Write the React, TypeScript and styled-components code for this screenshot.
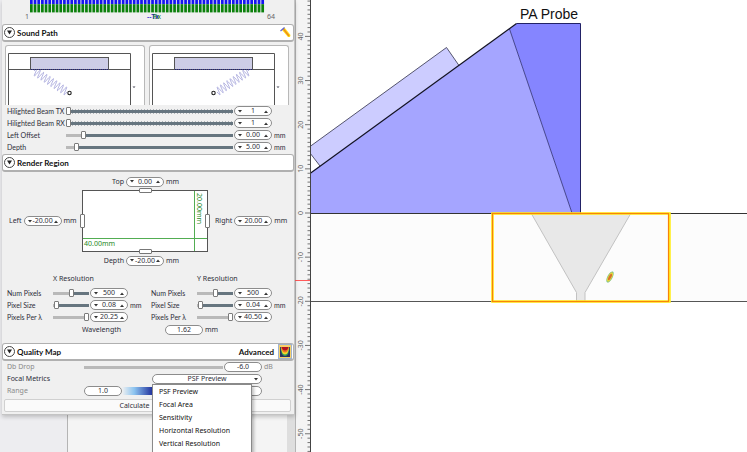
import React, { useState } from "react";
import styled, { createGlobalStyle } from "styled-components";

const GlobalStyle = createGlobalStyle`
  * { box-sizing: border-box; }
  body {
    margin: 0;
    background: #fff;
    color: #2e2e38;
    font: 7px/10px "Noto Sans", "Open Sans", sans-serif;
  }
  button, input, select { font: inherit; color: inherit; margin: 0; padding: 0; }
  svg { display: block; }
`;

const Page = styled.div`
  display: flex;
  height: 100vh;
  overflow: hidden;
`;

const Sidebar = styled.aside`
  display: flex;
  flex-direction: column;
  flex: none;
  width: clamp(280px, 40vw, 295px);
  background: #ededf0;
`;

const Panel = styled.div`
  margin-left: 2px;
  background: #f0f0f0;
  border-right: 1px solid #c4c4c4;
  border-bottom: 1px solid #c4c4c4;
  box-shadow: 0 2px 4px rgba(0, 0, 0, 0.2);
  padding-bottom: 2px;
  z-index: 1;
`;

const Backdrop = styled.div`
  flex: 1;
  margin-left: 67px;
  background: #f4f4f4;
  border-left: 1px solid #b4b4b4;
  border-right: 8px solid #dedede;
`;

const BeamStrip = styled.div`
  padding: 0 29px 0 28px;
`;

const BeamLabels = styled.div`
  display: flex;
  justify-content: space-between;
  margin: 0 -10px 0 -5px;
  height: 11px;
  line-height: 8px;
  color: #666;
`;

const TxLabel = styled.span`
  color: #2323d0;
  margin-left: 12px;
  font-weight: 600;
`;

const RxLabel = styled.span`
  color: #168016;
  margin-left: -6px;
`;

const SectionHeader = styled.header`
  display: flex;
  align-items: center;
  gap: 2px;
  height: 18px;
  padding: 0 1px;
  background: #fff;
  border: 1px solid #b0b0b0;
  border-bottom-width: 2px;
  border-radius: 3px;
`;

const CollapseButton = styled.button`
  display: grid;
  place-items: center;
  width: 11px;
  height: 11px;
  border: 1px solid #444;
  border-radius: 50%;
  background: #fff;
`;

const SectionTitle = styled.h2`
  flex: 1;
  margin: 0;
  font-family: Lato, "Noto Sans", sans-serif;
  font-size: 8px;
  line-height: 12px;
  font-weight: 700;
  color: #111;
`;

const ModeLabel = styled.span`
  font-family: Lato, "Noto Sans", sans-serif;
  font-size: 8px;
  font-weight: 700;
  color: #111;
  margin-right: 2px;
`;

const IconButton = styled.button<{ $active?: boolean }>`
  display: grid;
  place-items: center;
  width: 14px;
  height: 15px;
  border: 1px solid ${(p) => (p.$active ? "#9fb2cf" : "transparent")};
  background: ${(p) => (p.$active ? "#f8d26a" : "transparent")};
`;

const DiagramPair = styled.div`
  display: grid;
  grid-template-columns: 1fr 1fr;
  gap: 4px;
  height: 63px;
  padding: 3px 5px 0 3px;
`;

const DiagramCard = styled.div`
  overflow: hidden;
  background: #fff;
  border: 1px solid #b8b8b8;
  border-bottom: 0;
  border-radius: 3px 3px 0 0;
`;

const ParamList = styled.div`
  padding: 0 2px 1px 5px;
`;

const ParamRow = styled.div<{ $cols: string }>`
  display: grid;
  grid-template-columns: ${(p) => p.$cols};
  align-items: center;
  height: 12px;
  white-space: nowrap;
`;

const Label = styled.label<{ $muted?: boolean }>`
  color: ${(p) => (p.$muted ? "#8a8a8a" : "#2e2e3a")};
`;

const Unit = styled.span<{ $muted?: boolean }>`
  padding-left: 2px;
  color: ${(p) => (p.$muted ? "#8a8a8a" : "#2e2e3a")};
`;

const CompactRow = styled(ParamRow)`
  ${Label}, ${Unit} { font-family: Lato, "Noto Sans", sans-serif; }
`;

const SliderInput = styled.input<{ $pct: number; $ticked?: boolean; $plain?: boolean }>`
  appearance: none;
  width: 100%;
  height: 9px;
  background:
    linear-gradient(90deg, #b9b9b9 ${(p) => p.$pct}%, #66757f ${(p) => p.$pct}%) center / 100% 3px no-repeat
    ${(p) => (p.$ticked ? ", repeating-linear-gradient(90deg, #b0b4b8 0 1px, transparent 1px 3px) center / 100% 5px no-repeat" : "")};
  &::-webkit-slider-runnable-track { height: 9px; }
  &::-webkit-slider-thumb {
    appearance: none;
    width: 5px;
    height: 8px;
    border: 1px solid #7c7c7c;
    border-radius: 1px;
    background: #fff;
    opacity: ${(p) => (p.$plain ? 0 : 1)};
  }
`;

const SpinBox = styled.div`
  display: flex;
  align-items: center;
  width: 38px;
  height: 10px;
  padding: 0 3px;
  background: #fff;
  border: 1px solid #8c8c8c;
  border-radius: 5px;
`;

const SpinButton = styled.button`
  display: grid;
  place-items: center;
  flex: none;
  width: 4px;
  height: 7px;
  border: 0;
  background: none;
`;

const ValueInput = styled.input`
  flex: 1;
  min-width: 0;
  width: 100%;
  height: 8px;
  border: 0;
  background: none;
  text-align: center;
  line-height: 8px;
`;

const RegionGrid = styled.div`
  display: grid;
  grid-template-columns: 75px 1fr 84px;
  align-items: center;
  padding: 3px 2px 0 5px;
`;

const RegionEdge = styled.div`
  grid-column: 1 / -1;
  margin: 0 84px 0 75px;
  display: grid;
  grid-template-columns: 1fr 38px 1fr;
  align-items: center;
  height: 13px;
`;

const RegionSide = styled.div<{ $inset: number }>`
  display: flex;
  align-items: center;
  gap: 2px;
  padding-left: ${(p) => p.$inset}px;
  white-space: nowrap;
`;

const EdgeLabel = styled(Label)`
  text-align: right;
  padding-right: 2px;
`;

const RegionFrame = styled.div`
  position: relative;
  height: 62px;
  margin: 2px 0;
  background: #fff;
  border: 1px solid #555;
`;

const Handle = styled.button<{ $side: "left" | "right" | "top" | "bottom" }>`
  position: absolute;
  ${(p) =>
    p.$side === "left" || p.$side === "right"
      ? `top: 23px; width: 5px; height: 14px; ${p.$side}: -3px;`
      : `left: calc(50% - 6px); width: 13px; height: 5px; ${p.$side}: -3px;`}
  background: #fff;
  border: 1px solid #777;
  border-radius: 1px;
`;

const ResolutionGrid = styled.div`
  display: grid;
  grid-template-columns: 1fr 1fr;
  column-gap: 3px;
  padding: 6px 2px 0 5px;
`;

const ResolutionTitle = styled.h3`
  margin: 0;
  height: 14px;
  padding-left: 46px;
  font-size: 7px;
  line-height: 12px;
  font-weight: 400;
`;

const WavelengthRow = styled.div`
  display: flex;
  align-items: center;
  height: 14px;
  margin-bottom: 6px;
  padding-left: 80px;
`;

const WavelengthLabel = styled(Label)`
  width: 83px;
`;

const QualityBody = styled.div`
  padding: 0 2px 0 5px;
`;

const SelectWrap = styled.div`
  position: relative;
  display: flex;
  align-items: center;
`;

const MetricSelect = styled.select`
  appearance: none;
  width: 100%;
  height: 10px;
  border: 1px solid #8c8c8c;
  border-radius: 5px;
  background: #fff;
  text-align-last: center;
  line-height: 8px;
`;

const SelectArrow = styled.span`
  position: absolute;
  right: 4px;
  pointer-events: none;
`;

const Menu = styled.ul`
  position: absolute;
  top: 10px;
  left: 0;
  width: 100px;
  margin: 0;
  padding: 0 0 3px;
  list-style: none;
  background: #fff;
  border: 1px solid #8a8a8a;
  box-shadow: 2px 2px 3px rgba(0, 0, 0, 0.25);
`;

const MenuItem = styled.li`
  height: 13px;
  line-height: 13px;
  padding-left: 6px;
  color: #111;
  cursor: default;
`;

const RangeGradient = styled.div`
  height: 8px;
  background: linear-gradient(90deg, #f0f0f0, #8cc4f0 12%, #20309c 30%, #c33);
`;

const CalculateButton = styled.button`
  display: block;
  width: calc(100% - 5px);
  height: 13px;
  margin: 2px 3px 0 2px;
  padding-right: 26px;
  background: #fafafa;
  border: 1px solid #d0d0d0;
  border-radius: 2px;
  line-height: 11px;
`;

const Ruler = styled.div`
  flex: none;
  width: 15px;
  background: #f4f4f4;
`;

const Viewport = styled.main`
  flex: 1;
  min-width: 0;
  background: #fff;
`;

const Arrow = ({ up }: { up?: boolean }) => (
  <svg width="4" height="3" viewBox="0 0 4 3" aria-hidden="true">
    <path d={up ? "M0 3L2 .5L4 3Z" : "M0 0L2 2.5L4 0Z"} fill="#333" />
  </svg>
);

function Spin({ id, value, label }: { id: string; value: string; label: string }) {
  const [text, setText] = useState(value);
  const digits = value.includes(".") ? 2 : 0;
  const step = (d: number) => setText((t) => (Number(t) + d).toFixed(digits));
  return (
    <SpinBox>
      <SpinButton aria-label={`Decrease ${label}`} onClick={() => step(-1)}><Arrow /></SpinButton>
      <ValueInput id={id} value={text} onChange={(e) => setText(e.target.value)} />
      <SpinButton aria-label={`Increase ${label}`} onClick={() => step(1)}><Arrow up /></SpinButton>
    </SpinBox>
  );
}

function Slider({ pct, label, ticked, plain }: { pct: number; label: string; ticked?: boolean; plain?: boolean }) {
  const [v, setV] = useState(pct);
  return (
    <SliderInput type="range" min={0} max={100} value={v} $pct={v} $ticked={ticked} $plain={plain}
      aria-label={label} onChange={(e) => setV(Number(e.target.value))} />
  );
}

type Param = { id: string; label: string; pct: number; value: string; unit?: string; ticked?: boolean };

function ParamLine({ p, cols }: { p: Param; cols: string }) {
  return (
    <CompactRow $cols={cols}>
      <Label htmlFor={p.id}>{p.label}</Label>
      <Slider pct={p.pct} label={`${p.label} slider`} ticked={p.ticked} />
      <span />
      <Spin id={p.id} value={p.value} label={p.label} />
      <Unit>{p.unit}</Unit>
    </CompactRow>
  );
}

function Header({ title, children }: { title: string; children?: React.ReactNode }) {
  return (
    <SectionHeader>
      <CollapseButton aria-label={`Collapse ${title}`}>
        <svg width="5" height="5" viewBox="0 0 5 5"><path d="M0 .5H5L2.500 4.500Z" fill="#222" /></svg>
      </CollapseButton>
      <SectionTitle>{title}</SectionTitle>
      {children}
    </SectionHeader>
  );
}

function BeamChart() {
  return (
    <svg width="100%" height="13" viewBox="0 0 234 13" preserveAspectRatio="none" aria-hidden="true">
      {Array.from({ length: 64 }, (_, i) => (
        <g key={i}>
          <rect x={(i * 234) / 64} y="0" width="2.700" height="4.200" fill="#1414f0" />
          <rect x={(i * 234) / 64} y="4.200" width="2.700" height="8.200" fill="#0b800b" />
        </g>
      ))}
    </svg>
  );
}

function wave(x0: number, y0: number, x1: number, y1: number, cycles: number, amp: number) {
  const n = cycles * 12;
  const len = Math.hypot(x1 - x0, y1 - y0);
  const nx = -(y1 - y0) / len;
  const ny = (x1 - x0) / len;
  const sign = nx * ny > 0 ? 1 : -1;
  return Array.from({ length: n + 1 }, (_, i) => {
    const t = i / n;
    const a = Math.sin(t * cycles * Math.PI * 2) * amp * sign;
    return `${i ? "L" : "M"}${(x0 + (x1 - x0) * t + nx * a).toFixed(2)} ${(y0 + (y1 - y0) * t + ny * a).toFixed(2)}`;
  }).join("");
}

function BeamDiagram({ mirrored }: { mirrored?: boolean }) {
  const d = mirrored ? wave(99, 25, 67, 46, 10, 4) : wave(28, 25, 61, 46, 10, 4);
  return (
    <svg width="138" height="60" role="img" aria-label={mirrored ? "Receive beam path" : "Transmit beam path"}>
      <path d={d} fill="none" stroke="#a9a9dc" strokeWidth="0.900" />
      <path d="M2.500 60V7.500H124.500V60M2.500 23.500H124.500" fill="none" stroke="#555" />
      <rect x="24.500" y="11.500" width="78" height="12" fill="#cdcde6" stroke="#555" />
      <path d="M25 23.500H102" stroke="#1c1c80" strokeDasharray="1 1" />
      <circle cx="63.500" cy="47" r="1.700" fill="#fff" stroke="#222" strokeWidth="1.100" />
      <path d="M126.500 40.500H129.500L128 42Z" fill="#445" />
    </svg>
  );
}

const PencilIcon = () => (
  <svg width="13" height="13" viewBox="0 0 13 13">
    <path d="M3 3.500L5.500 1.500L11.500 9L11 11H9L3 4Z" fill="#ffe11a" />
    <path d="M4.500 3L10 10" stroke="#f08a1a" strokeWidth="1.400" />
    <path d="M1.500 5L5.500 1.500" stroke="#5b62d8" strokeWidth="1.200" />
  </svg>
);

const HeatIcon = () => (
  <svg width="10" height="10" viewBox="0 0 10 10">
    <rect width="10" height="10" fill="#2c3160" />
    <path d="M.5 0H9.500Q9 9 5 9Q1 9 .5 0Z" fill="#35a35a" />
    <path d="M1 0H9Q8.500 7.500 5 7.500Q1.500 7.500 1 0Z" fill="#f4d92b" />
    <path d="M1 0H9Q8 5.500 5 5.500Q2 5.500 1 0Z" fill="#ef7426" />
    <path d="M1.500 0H8.500Q7.500 3.500 5 3.500Q2.500 3.500 1.500 0Z" fill="#b01420" />
  </svg>
);

function RegionBox() {
  return (
    <svg width="100%" height="60" role="img" aria-label="Render region, 40.00mm by 20.00mm">
      <path d="M0 47.500H124M111.500 0V60" stroke="#52ad52" />
      <text x="1" y="55" fontSize="7" fill="#1f8a1f">40.00mm</text>
      <text transform="translate(114 2) rotate(90)" fontSize="7" fill="#1f8a1f">20.00mm</text>
    </svg>
  );
}

const ZERO = 213;
const MM = 4.415;

function RulerScale() {
  const ticks = Array.from({ length: 104 }, (_, i) => i - 55);
  return (
    <svg width="15" height="100%" aria-hidden="true">
      <path d="M.5 0V2000" stroke="#b4b4b4" />
      {ticks.map((t) => {
        const y = ZERO - t * MM;
        const major = t % 10 === 0;
        return (
          <g key={t}>
            <path d={`M${major ? 10 : 12.5} ${y}H15`} stroke="#666" strokeWidth="0.900" />
            {major && (
              <text transform={`translate(8 ${y}) rotate(-90)`} textAnchor="middle" fontSize="7" fill="#666">{t}</text>
            )}
          </g>
        );
      })}
      <path d="M0 280.500H15" stroke="#ff5a5a" />
    </svg>
  );
}

function Scene() {
  return (
    <svg width="100%" height="100%" role="img" aria-label="PA Probe on weld inspection region">
      <rect x="0" y="213" width="100%" height="88" fill="#fcfcfc" />
      <path d="M0 173L199.500 29L262 213H0Z" fill="#a5a5ff" />
      <path d="M199.500 29L206.500 23.500H270.500V213H262Z" fill="#8585ff" />
      <path d="M0 146.500L136.500 47.500L149 65.500L10 166L0 153Z" fill="#ccccff" />
      <path d="M0 146.500L136.500 47.500L149 65.500M0 153L10 166" fill="none" stroke="#44445c" strokeWidth="0.900" />
      <path d="M199.500 29L262 213" stroke="#3a3a80" strokeWidth="0.900" />
      <path d="M0 173.500L206.500 23.500" fill="none" stroke="#111122" strokeWidth="1.200" />
      <path d="M206.500 23.500H270.500V213" fill="none" stroke="#222266" />
      <rect x="0" y="213" width="100%" height="1" fill="#333" />
      <rect x="0" y="301" width="100%" height="1" fill="#555" />
      <path d="M221 213H321L275 292.500V301H266.500V292.500Z" fill="#e8e8e8" />
      <path d="M221 213L266.500 292.500V301M321 213L275 292.500V301" fill="none" stroke="#c2c2c2" />
      <rect x="182.500" y="213.500" width="177" height="88" fill="none" stroke="#ffee20" strokeWidth="2.600" />
      <rect x="182.500" y="213.500" width="176" height="88" fill="none" stroke="#f88408" strokeWidth="1.200" />
      <g transform="translate(300 277) rotate(28)">
        <ellipse rx="2.600" ry="6.200" fill="#7cc08c" />
        <ellipse rx="2" ry="5.200" fill="#e0d840" />
        <ellipse rx="1.300" ry="3.500" fill="#d9702c" />
      </g>
      <text x="210" y="19" fontFamily="Liberation Sans, Arial, sans-serif" fontSize="14" fill="#111">PA Probe</text>
      <path d="M.5 0V2000" stroke="#444" />
    </svg>
  );
}

const soundParams: Param[] = [
  { id: "tx", label: "Hilighted Beam TX", pct: 0, value: "1", ticked: true },
  { id: "rx", label: "Hilighted Beam RX", pct: 0, value: "1", ticked: true },
  { id: "offset", label: "Left Offset", pct: 9, value: "0.00", unit: "mm" },
  { id: "depth", label: "Depth", pct: 5, value: "5.00", unit: "mm" },
];

const resolutions: { title: string; params: Param[] }[] = [
  {
    title: "X Resolution",
    params: [
      { id: "xn", label: "Num Pixels", pct: 50, value: "500" },
      { id: "xs", label: "Pixel Size", pct: 3, value: "0.08", unit: "mm" },
      { id: "xl", label: "Pixels Per λ", pct: 100, value: "20.25" },
    ],
  },
  {
    title: "Y Resolution",
    params: [
      { id: "yn", label: "Num Pixels", pct: 50, value: "500" },
      { id: "ys", label: "Pixel Size", pct: 3, value: "0.04", unit: "mm" },
      { id: "yl", label: "Pixels Per λ", pct: 100, value: "40.50" },
    ],
  },
];

const metrics = ["PSF Preview", "Focal Area", "Sensitivity", "Horizontal Resolution", "Vertical Resolution"];

export default function App() {
  const [metric, setMetric] = useState(metrics[0]);
  return (
    <Page>
      <GlobalStyle />
      <Sidebar>
        <Panel>
          <BeamStrip>
            <BeamChart />
            <BeamLabels>
              <span>1</span>
              <span><TxLabel>--Tx</TxLabel><RxLabel>Rx</RxLabel></span>
              <span>64</span>
            </BeamLabels>
          </BeamStrip>

          <Header title="Sound Path">
            <IconButton aria-label="Draw path"><PencilIcon /></IconButton>
          </Header>
          <DiagramPair>
            <DiagramCard><BeamDiagram /></DiagramCard>
            <DiagramCard><BeamDiagram mirrored /></DiagramCard>
          </DiagramPair>
          <ParamList>
            {soundParams.map((p) => (
              <ParamLine key={p.id} p={p} cols="59px 1fr 1px 38px 20px" />
            ))}
          </ParamList>

          <Header title="Render Region" />
          <RegionGrid>
            <RegionEdge>
              <EdgeLabel htmlFor="top">Top</EdgeLabel>
              <Spin id="top" value="0.00" label="Top" />
              <Unit>mm</Unit>
            </RegionEdge>
            <RegionSide $inset={2}>
              <Label htmlFor="left">Left</Label>
              <Spin id="left" value="-20.00" label="Left" />
              <span>mm</span>
            </RegionSide>
            <RegionFrame>
              <RegionBox />
              <Handle $side="left" aria-label="Left edge" />
              <Handle $side="right" aria-label="Right edge" />
              <Handle $side="top" aria-label="Top edge" />
              <Handle $side="bottom" aria-label="Bottom edge" />
            </RegionFrame>
            <RegionSide $inset={7}>
              <Label htmlFor="right">Right</Label>
              <Spin id="right" value="20.00" label="Right" />
              <span>mm</span>
            </RegionSide>
            <RegionEdge>
              <EdgeLabel htmlFor="bottom">Depth</EdgeLabel>
              <Spin id="bottom" value="-20.00" label="Region depth" />
              <Unit>mm</Unit>
            </RegionEdge>
          </RegionGrid>
          <ResolutionGrid>
            {resolutions.map((r) => (
              <div key={r.title}>
                <ResolutionTitle>{r.title}</ResolutionTitle>
                {r.params.map((p) => (
                  <ParamLine key={p.id} p={p} cols="1fr 36px 1px 38px 20px" />
                ))}
              </div>
            ))}
          </ResolutionGrid>
          <WavelengthRow>
            <WavelengthLabel htmlFor="wavelength">Wavelength</WavelengthLabel>
            <SpinBox><ValueInput id="wavelength" defaultValue="1.62" /></SpinBox>
            <Unit>mm</Unit>
          </WavelengthRow>

          <Header title="Quality Map">
            <ModeLabel>Advanced</ModeLabel>
            <IconButton $active aria-label="Toggle heat map"><HeatIcon /></IconButton>
          </Header>
          <QualityBody>
            <ParamRow $cols="77px 1fr 1px 38px 30px">
              <Label $muted htmlFor="db">Db Drop</Label>
              <Slider pct={100} label="Db drop slider" plain />
              <span />
              <SpinBox><ValueInput id="db" defaultValue="-6.0" /></SpinBox>
              <Unit $muted>dB</Unit>
            </ParamRow>
            <ParamRow $cols="145px 1fr 30px">
              <Label htmlFor="metric">Focal Metrics</Label>
              <SelectWrap>
                <MetricSelect id="metric" value={metric} onChange={(e) => setMetric(e.target.value)}>
                  {metrics.map((m) => <option key={m}>{m}</option>)}
                </MetricSelect>
                <SelectArrow><Arrow /></SelectArrow>
                <Menu role="listbox" aria-label="Focal Metrics options">
                  {metrics.map((m) => (
                    <MenuItem key={m} role="option" aria-selected={m === metric} onClick={() => setMetric(m)}>{m}</MenuItem>
                  ))}
                </Menu>
              </SelectWrap>
            </ParamRow>
            <ParamRow $cols="77px 38px 1fr 38px 30px">
              <Label $muted htmlFor="rmin">Range</Label>
              <SpinBox><ValueInput id="rmin" defaultValue="1.0" /></SpinBox>
              <RangeGradient />
              <SpinBox><ValueInput aria-label="Range maximum" defaultValue="" /></SpinBox>
            </ParamRow>
          </QualityBody>
          <CalculateButton>Calculate</CalculateButton>
        </Panel>
        <Backdrop />
      </Sidebar>
      <Ruler><RulerScale /></Ruler>
      <Viewport><Scene /></Viewport>
    </Page>
  );
}
